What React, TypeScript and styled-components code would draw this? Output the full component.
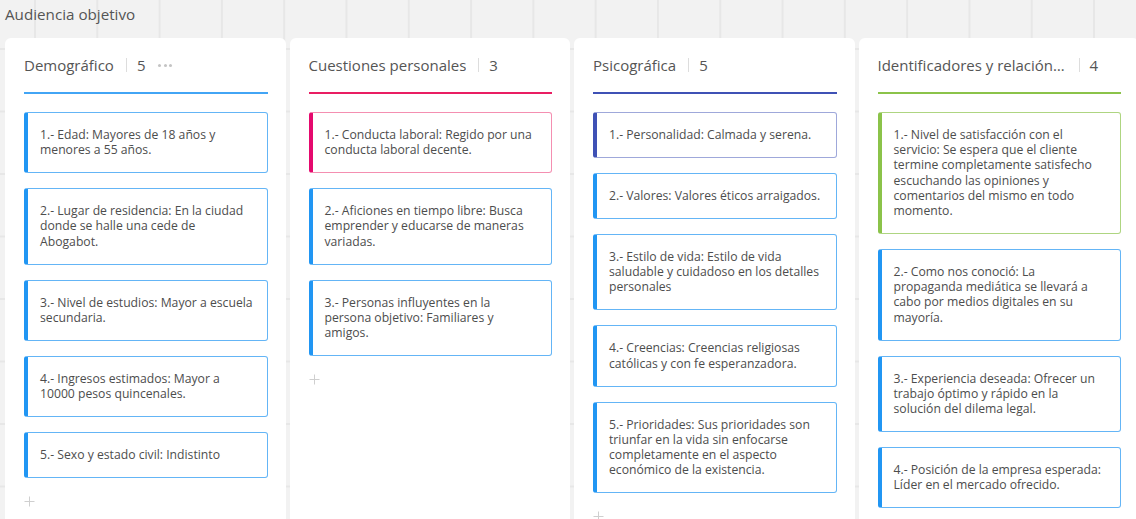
import React from "react";
import styled, { createGlobalStyle } from "styled-components";

const Global = createGlobalStyle`
  html, body { margin: 0; padding: 0; }
  body {
    width: 1136px;
    height: 519px;
    overflow: hidden;
    font-family: "Open Sans", "Noto Sans", sans-serif;
    background-color: #f2f2f2;
    background-image:
      linear-gradient(to right, #e7e7e7 2px, transparent 2px),
      linear-gradient(to bottom, #e7e7e7 2px, transparent 2px);
    background-size: 62.3px 62.5px;
    background-position: 34px 48px;
  }
`;

type Tone = { main: string; light: string };
const tones: Record<string, Tone> = {
  blue: { main: "#2196f3", light: "#64b5f6" },
  pink: { main: "#e5096e", light: "#f48fb1" },
  indigo: { main: "#3f51b5", light: "#9fa8da" },
  green: { main: "#8bc34a", light: "#aed581" },
};

const Page = styled.div`
  padding: 0 0 0 5px;
  width: 1136px;
  box-sizing: border-box;
  overflow: hidden;
`;

const Title = styled.div`
  font-size: 15.2px;
  line-height: 29px;
  color: #555;
  margin-bottom: 9px;
`;

const Board = styled.div`
  display: flex;
  gap: 4px;
  align-items: flex-start;
`;

const Column = styled.section`
  flex: 0 0 280.5px;
  min-width: 0;
  min-height: 520px;
  background: #fff;
  border-radius: 6px;
  padding: 0 18px 0 19px;
  box-sizing: border-box;
  overflow: hidden;
`;

const Header = styled.header<{ $color: string }>`
  display: flex;
  align-items: center;
  padding: 17px 0 17px;
  line-height: 20px;
  border-bottom: 2px solid ${(p) => p.$color};
  font-size: 15px;
  color: #555;
  white-space: nowrap;
`;

const HeaderName = styled.span`
  overflow: hidden;
  text-overflow: ellipsis;
  min-width: 0;
  max-width: 189px;
`;

const Sep = styled.span`
  display: inline-block;
  width: 1px;
  height: 14px;
  background: #ddd;
  margin: 0 10px 0 12px;
  flex: none;
`;

const Count = styled.span`
  flex: none;
`;

const Dots = styled.span`
  display: inline-flex;
  gap: 2.5px;
  margin-left: 13px;
  & > i {
    width: 3px;
    height: 3px;
    border-radius: 50%;
    background: #c4c4c4;
    display: block;
  }
`;

const CardList = styled.div`
  display: flex;
  flex-direction: column;
  gap: 15px;
  padding-top: 18px;
`;

const Card = styled.div<{ $tone: Tone }>`
  border: 1px solid ${(p) => p.$tone.light};
  border-left: 4px solid ${(p) => p.$tone.main};
  border-radius: 3px;
  padding: 14px 12px 14.8px;
  font-size: 12.2px;
  line-height: 15.2px;
  color: #4d4d4d;
  background: #fff;
  white-space: nowrap;
`;

const Line = styled.span`
  display: block;
`;

const Add = styled.div`
  padding: 18px 0 0 0;
  line-height: 0;
`;

const Plus = () => (
  <svg width="11" height="11" viewBox="0 0 11 11">
    <path d="M5.5 0.5v10M0.5 5.5h10" stroke="#cfcfcf" strokeWidth="1" fill="none" />
  </svg>
);

type Col = {
  name: string;
  color: string;
  dots?: boolean;
  cards: { lines: string[]; tone?: string }[];
};

const columns: Col[] = [
  {
    name: "Demográfico",
    color: "#42a5f5",
    dots: true,
    cards: [
      { lines: ["1.- Edad: Mayores de 18 años y", "menores a 55 años."] },
      { lines: ["2.- Lugar de residencia: En la ciudad", "donde se halle una cede de", "Abogabot."] },
      { lines: ["3.- Nivel de estudios: Mayor a escuela", "secundaria."] },
      { lines: ["4.- Ingresos estimados: Mayor a", "10000 pesos quincenales."] },
      { lines: ["5.- Sexo y estado civil: Indistinto"] },
    ],
  },
  {
    name: "Cuestiones personales",
    color: "#e91e63",
    cards: [
      { lines: ["1.- Conducta laboral: Regido por una", "conducta laboral decente."], tone: "pink" },
      { lines: ["2.- Aficiones en tiempo libre: Busca", "emprender y educarse de maneras", "variadas."] },
      { lines: ["3.- Personas influyentes en la", "persona objetivo: Familiares y", "amigos."] },
    ],
  },
  {
    name: "Psicográfica",
    color: "#3f51b5",
    cards: [
      { lines: ["1.- Personalidad: Calmada y serena."], tone: "indigo" },
      { lines: ["2.- Valores: Valores éticos arraigados."] },
      { lines: ["3.- Estilo de vida: Estilo de vida", "saludable y cuidadoso en los detalles", "personales"] },
      { lines: ["4.- Creencias: Creencias religiosas", "católicas y con fe esperanzadora."] },
      {
        lines: [
          "5.- Prioridades: Sus prioridades son",
          "triunfar en la vida sin enfocarse",
          "completamente en el aspecto",
          "económico de la existencia.",
        ],
      },
    ],
  },
  {
    name: "Identificadores y relación con la marca",
    color: "#8bc34a",
    cards: [
      {
        lines: [
          "1.- Nivel de satisfacción con el",
          "servicio: Se espera que el cliente",
          "termine completamente satisfecho",
          "escuchando las opiniones y",
          "comentarios del mismo en todo",
          "momento.",
        ],
        tone: "green",
      },
      {
        lines: [
          "2.- Como nos conoció: La",
          "propaganda mediática se llevará a",
          "cabo por medios digitales en su",
          "mayoría.",
        ],
      },
      { lines: ["3.- Experiencia deseada: Ofrecer un", "trabajo óptimo y rápido en la", "solución del dilema legal."] },
      { lines: ["4.- Posición de la empresa esperada:", "Líder en el mercado ofrecido."] },
    ],
  },
];

export default function App() {
  return (
    <Page>
      <Global />
      <Title>Audiencia objetivo</Title>
      <Board>
        {columns.map((c) => (
          <Column key={c.name}>
            <Header $color={c.color}>
              <HeaderName>{c.name}</HeaderName>
              <Sep />
              <Count>{c.cards.length}</Count>
              {c.dots && (
                <Dots>
                  <i />
                  <i />
                  <i />
                </Dots>
              )}
            </Header>
            <CardList>
              {c.cards.map((card, i) => (
                <Card key={i} $tone={tones[card.tone ?? "blue"]}>
                  {card.lines.map((l, j) => (
                    <Line key={j}>{l}</Line>
                  ))}
                </Card>
              ))}
            </CardList>
            <Add>
              <Plus />
            </Add>
          </Column>
        ))}
      </Board>
    </Page>
  );
}
